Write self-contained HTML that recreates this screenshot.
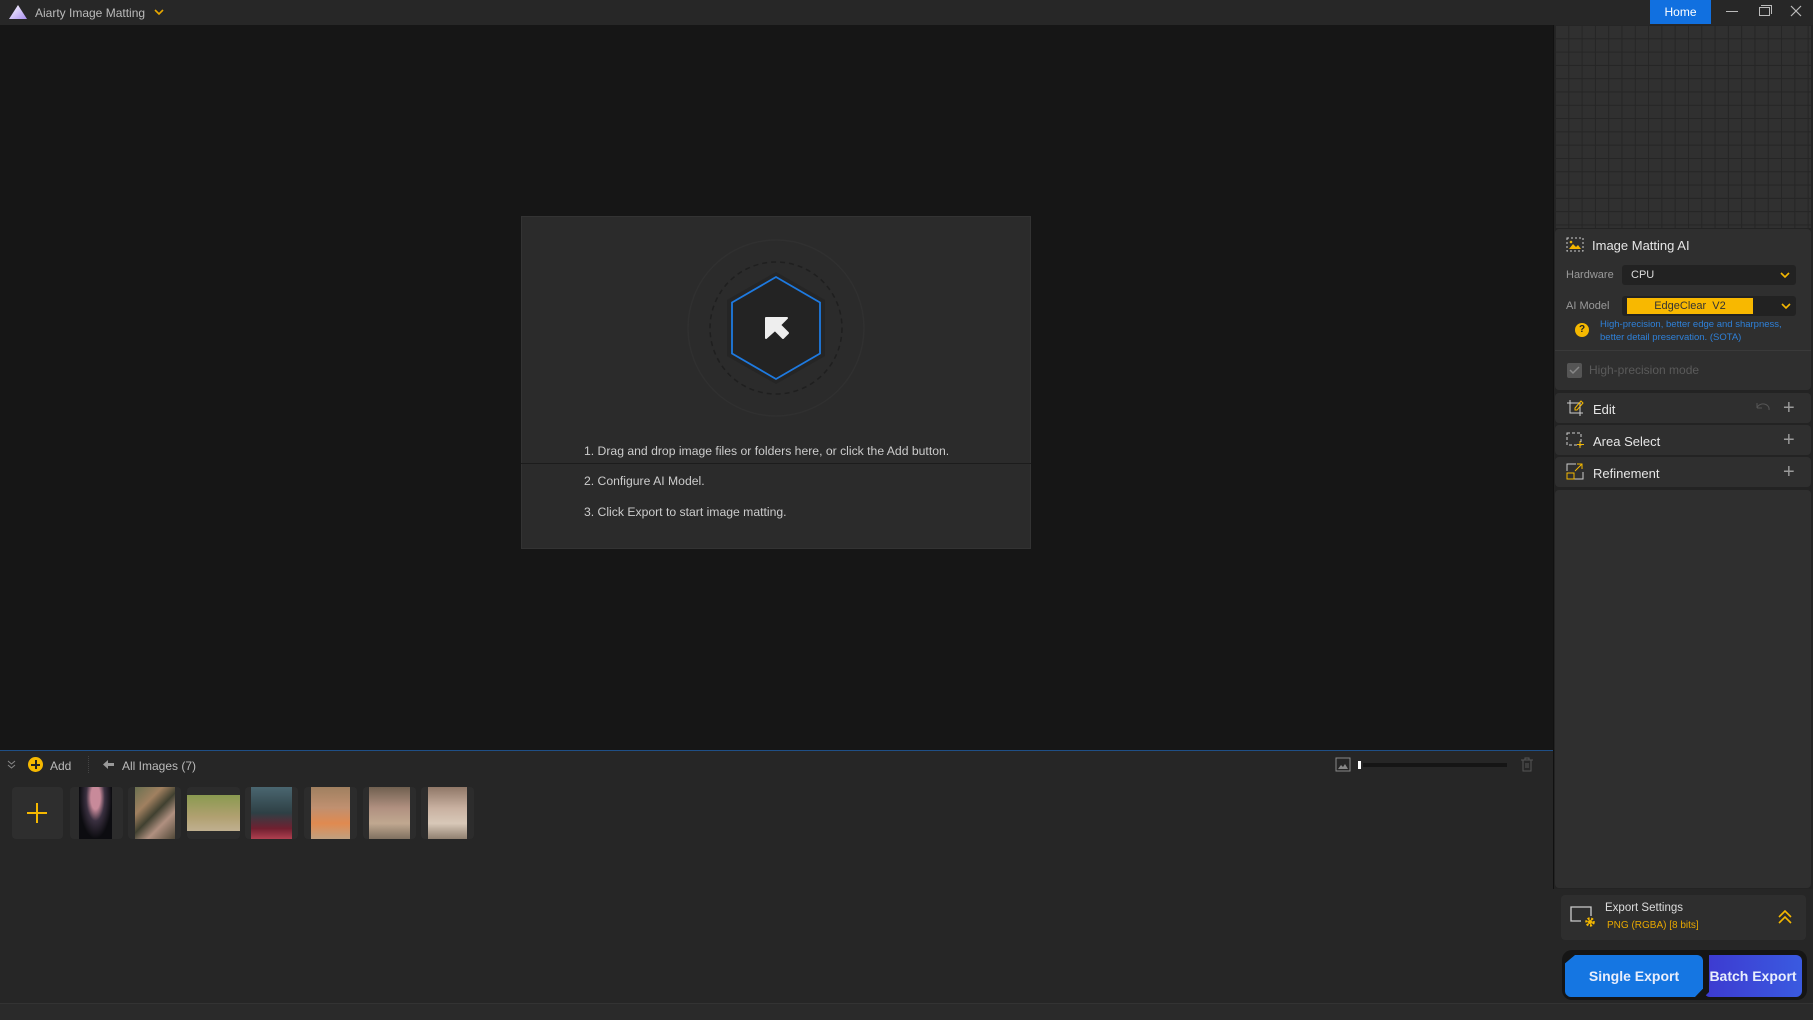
<!DOCTYPE html>
<html><head><meta charset="utf-8"><style>
*{box-sizing:border-box;margin:0;padding:0}
body{width:1813px;height:1020px;overflow:hidden;background:#161616;font-family:"Liberation Sans",Arial,sans-serif;position:relative;color:#ddd}
.abs{position:absolute}
.title{left:0;top:0;width:1813px;height:25px;background:#272727}
.grid{left:1555px;top:25px;width:256px;height:203px;background-color:#303030;background-image:linear-gradient(#252525 1px,transparent 1px),linear-gradient(90deg,#252525 1px,transparent 1px);background-size:13.3px 13.3px}
.card{background:#2f2f2f;border-radius:4px}
.lbl{font-size:11px;color:#9a9a9a}
.row{font-size:13px;color:#e6e6e6}
.plus{color:#9a9a9a;font-size:20px;font-weight:300}
.thumb{top:787px;height:52px;width:53px;background:#2c2c2c;border-radius:4px;overflow:hidden}
.thumb div{position:absolute;top:0;bottom:0}
.ins{font-size:12.2px;color:#ccc}
</style></head><body>
<div class="abs title"></div>
<svg class="abs" style="left:8px;top:4px" width="20" height="16" viewBox="0 0 20 16"><defs><linearGradient id="lg" x1="0" y1="0" x2="1" y2="1"><stop offset="0" stop-color="#ffffff"/><stop offset="1" stop-color="#a98ef0"/></linearGradient></defs><path d="M10 1L19 15H1Z" fill="url(#lg)"/></svg>
<div class="abs" style="left:35px;top:6px;font-size:12px;color:#bbb">Aiarty Image Matting</div>
<svg class="abs" style="left:154px;top:9px" width="10" height="7"><path d="M1 1L5 5L9 1" stroke="#e8a800" stroke-width="1.6" fill="none"/></svg>
<div class="abs" style="left:1650px;top:0;width:61px;height:24px;background:#1170e0;color:#fff;font-size:12px;text-align:center;line-height:24px">Home</div>
<div class="abs" style="left:1726px;top:11px;width:12px;height:1px;background:#bbb"></div>
<div class="abs" style="left:1759px;top:7px;width:11px;height:9px;border:1px solid #bbb"></div>
<div class="abs" style="left:1761px;top:5px;width:11px;height:9px;border-top:1px solid #bbb;border-right:1px solid #bbb"></div>
<svg class="abs" style="left:1790px;top:5px" width="12" height="12"><path d="M1 1L11 11M11 1L1 11" stroke="#bbb" stroke-width="1.2"/></svg>

<div class="abs" style="left:521px;top:216px;width:510px;height:333px;background:#2b2b2b;border:1px solid #333"></div>
<div class="abs" style="left:521px;top:463px;width:510px;height:1px;background:#1c1c1c"></div>
<svg class="abs" style="left:676px;top:228px" width="200" height="200" viewBox="0 0 200 200">
<circle cx="100" cy="100" r="88" fill="none" stroke="#303030" stroke-width="1.5"/>
<circle cx="100" cy="100" r="66" fill="none" stroke="#1f1f1f" stroke-width="1.5" stroke-dasharray="5 4"/>
<polygon points="100,44 149,72 149,128 100,156 51,128 51,72" fill="#252525"/>
<polygon points="100,49 144,74.5 144,125.5 100,151 56,125.5 56,74.5" fill="#232323" stroke="#1e7ae0" stroke-width="1.8"/>
<path d="M90 90H111L104 97L112 105L107 110L99 102L90 110Z" fill="#eee" stroke="#eee" stroke-width="2" stroke-linejoin="round"/>
</svg>
<div class="abs ins" style="left:584px;top:444px">1. Drag and drop image files or folders here, or click the Add button.</div>
<div class="abs ins" style="left:584px;top:474px">2. Configure AI Model.</div>
<div class="abs ins" style="left:584px;top:505px">3. Click Export to start image matting.</div>

<div class="abs" style="left:0;top:750px;width:1553px;height:253px;background:#262626;border-top:1px solid #1f4f86"></div>
<svg class="abs" style="left:7px;top:760px" width="9" height="9"><path d="M1 1L4.5 4L8 1M1 5L4.5 8L8 5" stroke="#888" fill="none"/></svg>
<div class="abs" style="left:28px;top:757px;width:15px;height:15px;border-radius:50%;background:#f5b800"></div>
<div class="abs" style="left:31px;top:764px;width:9px;height:1.5px;background:#222"></div>
<div class="abs" style="left:35px;top:760px;width:1.5px;height:9px;background:#222"></div>
<div class="abs" style="left:50px;top:759px;font-size:12px;color:#bbb">Add</div>
<div class="abs" style="left:88px;top:756px;width:1px;height:17px;border-left:1px dotted #444"></div>
<svg class="abs" style="left:102px;top:759px" width="13" height="11"><path d="M1 5.5L6 1V4H12V7H6V10Z" fill="#999"/></svg>
<div class="abs" style="left:122px;top:759px;font-size:12px;color:#bbb">All Images (7)</div>
<svg class="abs" style="left:1335px;top:757px" width="16" height="15"><rect x="1" y="1" width="14" height="13" fill="none" stroke="#888"/><path d="M3 12L6 8L8 10L10 7L13 12Z" fill="#888"/></svg>
<div class="abs" style="left:1358px;top:761px;width:3px;height:8px;background:#fff"></div>
<div class="abs" style="left:1363px;top:763px;width:144px;height:4px;background:#151515"></div>
<svg class="abs" style="left:1520px;top:757px" width="14" height="15"><path d="M1 3H13M5 3V1H9V3M3 3V14H11V3M6 6V11M8 6V11" stroke="#555" fill="none"/></svg>
<div class="abs thumb" style="left:12px;width:51px;background:#2e2e2e"></div>
<div class="abs" style="left:27px;top:812px;width:20px;height:2px;background:#f5b800"></div>
<div class="abs" style="left:36px;top:803px;width:2px;height:20px;background:#f5b800"></div>
<div class="abs thumb" style="left:70px"><div style="left:9px;width:33px;background:radial-gradient(ellipse at 50% 20%,#c88a9a 0 20%,#3a3040 40%,#0c0c10 70%)"></div></div>
<div class="abs thumb" style="left:128px"><div style="left:7px;width:40px;background:linear-gradient(135deg,#6a7050,#a08060 30%,#404030 50%,#b09080 70%,#504838)"></div></div>
<div class="abs thumb" style="left:187px"><div style="left:0;right:0;top:8px;bottom:8px;background:linear-gradient(#8a9a50,#b0a070 60%,#c0b090);"></div></div>
<div class="abs thumb" style="left:245px"><div style="left:6px;width:41px;background:linear-gradient(#4a6670,#2e4045 50%,#702030 80%,#b04050)"></div></div>
<div class="abs thumb" style="left:304px"><div style="left:7px;width:39px;background:linear-gradient(#a08060,#c09070 40%,#e08a50 70%,#c0a080)"></div></div>
<div class="abs thumb" style="left:363px"><div style="left:6px;width:41px;background:linear-gradient(#706050,#b09080 40%,#c0a890 70%,#807060)"></div></div>
<div class="abs thumb" style="left:421px"><div style="left:7px;width:39px;background:linear-gradient(#907868,#c8b0a0 40%,#d8c8b8 70%,#908070)"></div></div>

<div class="abs" style="left:1553px;top:25px;width:260px;height:978px;background:#232323;border-left:1px solid #111"></div>
<div class="abs grid"></div>
<div class="abs card" style="left:1555px;top:229px;width:256px;height:161px"></div>
<svg class="abs" style="left:1566px;top:237px" width="18" height="15"><rect x="1" y="1" width="16" height="13" fill="none" stroke="#ccc" stroke-dasharray="2 2"/><path d="M3 12L7 7L10 10L12 8L15 12Z" fill="#f5b800"/><circle cx="5" cy="5" r="1.3" fill="#f5b800"/></svg>
<div class="abs row" style="left:1592px;top:238px">Image Matting AI</div>
<div class="abs lbl" style="left:1566px;top:269px">Hardware</div>
<div class="abs" style="left:1622px;top:265px;width:174px;height:20px;background:#222;border-radius:3px"></div>
<div class="abs" style="left:1631px;top:269px;font-size:11px;color:#ddd">CPU</div>
<svg class="abs" style="left:1780px;top:272px" width="10" height="7"><path d="M1 1L5 5L9 1" stroke="#f5b800" stroke-width="1.6" fill="none"/></svg>
<div class="abs lbl" style="left:1566px;top:300px">AI Model</div>
<div class="abs" style="left:1622px;top:296px;width:174px;height:20px;background:#222;border-radius:3px"></div>
<div class="abs" style="left:1627px;top:298px;width:126px;height:16px;background:#f8b800;color:#333;font-size:11px;text-align:center;line-height:16px">EdgeClear&nbsp; V2</div>
<svg class="abs" style="left:1781px;top:303px" width="10" height="7"><path d="M1 1L5 5L9 1" stroke="#f5b800" stroke-width="1.6" fill="none"/></svg>
<div class="abs" style="left:1575px;top:323px;width:14px;height:14px;border-radius:50%;background:#f5b800;color:#222;font-size:10px;font-weight:bold;text-align:center;line-height:14px">?</div>
<div class="abs" style="left:1600px;top:318px;font-size:9.5px;color:#2f80d8;line-height:13px">High-precision, better edge and sharpness,<br>better detail preservation. (SOTA)</div>
<div class="abs" style="left:1555px;top:350px;width:256px;height:1px;background:#3a3a3a"></div>
<div class="abs" style="left:1567px;top:363px;width:15px;height:15px;background:#555;border-radius:2px"></div>
<svg class="abs" style="left:1569px;top:366px" width="11" height="9"><path d="M1 4L4 7L10 1" stroke="#888" stroke-width="1.5" fill="none"/></svg>
<div class="abs" style="left:1589px;top:363px;font-size:12px;color:#5a5a5a">High-precision mode</div>

<div class="abs card" style="left:1555px;top:393px;width:256px;height:30px"></div>
<svg class="abs" style="left:1566px;top:399px" width="18" height="18"><path d="M4 1V14H17M1 4H14V17" stroke="#ccc" fill="none"/><path d="M9 9L15 2L17 4L11 11L9 11Z" stroke="#f5b800" fill="none"/></svg>
<div class="abs row" style="left:1593px;top:402px">Edit</div>
<svg class="abs" style="left:1755px;top:402px" width="16" height="10"><path d="M2 6A6 5 0 0 1 14 8M2 6V1M2 6H7" stroke="#555" fill="none"/></svg>
<div class="abs plus" style="left:1783px;top:397px">+</div>
<div class="abs card" style="left:1555px;top:425px;width:256px;height:30px"></div>
<svg class="abs" style="left:1566px;top:432px" width="18" height="16"><rect x="1" y="1" width="14" height="12" fill="none" stroke="#ccc" stroke-dasharray="3 2"/><path d="M14 9V16M11 12.5H18" stroke="#f5b800"/></svg>
<div class="abs row" style="left:1593px;top:434px">Area Select</div>
<div class="abs plus" style="left:1783px;top:429px">+</div>
<div class="abs card" style="left:1555px;top:457px;width:256px;height:30px"></div>
<svg class="abs" style="left:1566px;top:463px" width="18" height="17"><path d="M1 8V1H10M17 9V16H8" stroke="#ccc" fill="none"/><rect x="1" y="10" width="7" height="6" fill="none" stroke="#f5b800"/><path d="M9 8L16 1M11 1H16V6" stroke="#f5b800" fill="none"/></svg>
<div class="abs row" style="left:1593px;top:466px">Refinement</div>
<div class="abs plus" style="left:1783px;top:461px">+</div>

<div class="abs card" style="left:1555px;top:490px;width:256px;height:398px"></div>
<div class="abs" style="left:1553px;top:889px;width:260px;height:114px;background:#262626"></div>
<div class="abs" style="left:1561px;top:895px;width:245px;height:45px;background:#2e2e2e;border-radius:4px"></div>
<svg class="abs" style="left:1569px;top:905px" width="28" height="24"><path d="M12 16H2V2H22V11" stroke="#ccc" stroke-width="1.3" fill="none"/><circle cx="21" cy="17" r="3.5" fill="none" stroke="#f5b800" stroke-width="2.5" stroke-dasharray="2 1.5"/><circle cx="21" cy="17" r="2" fill="#f5b800"/></svg>
<div class="abs" style="left:1605px;top:902px;font-size:11.5px;color:#ddd">Export Settings</div>
<div class="abs" style="left:1607px;top:920px;font-size:10px;color:#e8a800">PNG (RGBA) [8 bits]</div>
<svg class="abs" style="left:1778px;top:910px" width="14" height="14"><path d="M1 7L7 1L13 7M1 13L7 7L13 13" stroke="#f5b800" stroke-width="1.6" fill="none"/></svg>
<div class="abs" style="left:1562px;top:950px;width:245px;height:50px;background:#151515;border-radius:10px"></div>
<div class="abs" style="left:1565px;top:955px;width:138px;height:42px;background:#1576e2;clip-path:polygon(10px 0,100% 0,100% 80%,130px 100%,4px 100%,0 92%,0 20%);border-radius:6px;color:#e8eefc;font-size:14px;font-weight:bold;text-align:center;line-height:42px">Single Export</div>
<div class="abs" style="left:1704px;top:955px;width:98px;height:42px;background:linear-gradient(90deg,#3d3ad0,#3a5ae0);clip-path:polygon(5px 0,100% 0,100% 100%,0 100%,5px 88%);border-radius:6px;color:#e8eefc;font-size:14px;font-weight:bold;text-align:center;line-height:42px">Batch Export</div>
<div class="abs" style="left:0;top:1003px;width:1813px;height:17px;background:#2a2a2a;border-top:1px solid #333"></div>
</body></html>
